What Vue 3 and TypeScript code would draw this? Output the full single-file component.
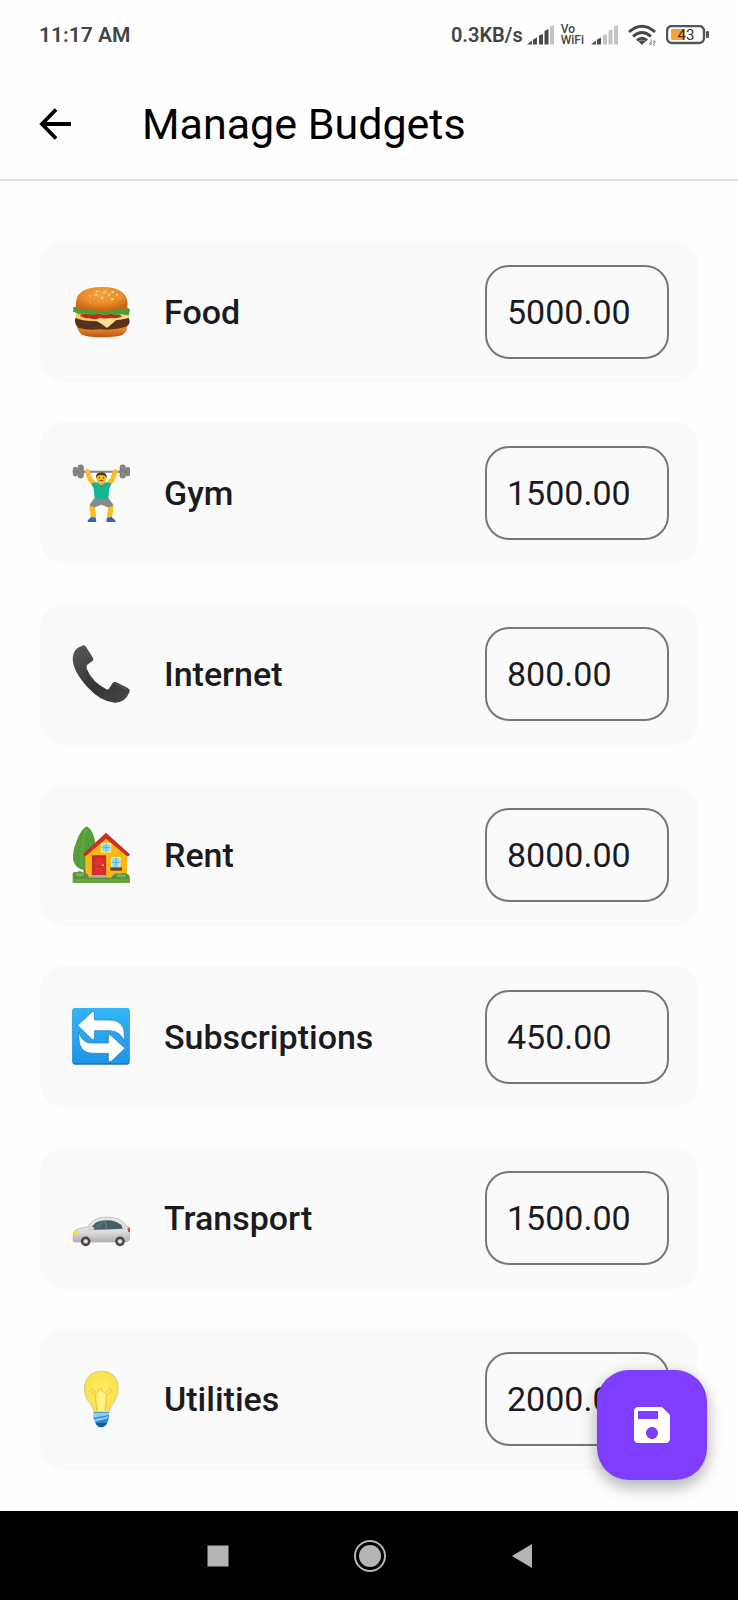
<script setup lang="ts">
import { reactive } from 'vue'

interface Budget {
  id: string
  name: string
  view: string
  amount: string
}

const budgets = reactive<Budget[]>([
  { id: 'food', name: 'Food', view: '36 39 174 174', amount: '5000.00' },
  { id: 'gym', name: 'Gym', view: '36 27 174 174', amount: '1500.00' },
  { id: 'internet', name: 'Internet', view: '36 31 174 174', amount: '800.00' },
  { id: 'rent', name: 'Rent', view: '36 35 174 174', amount: '8000.00' },
  { id: 'subscriptions', name: 'Subscriptions', view: '36 24 174 174', amount: '450.00' },
  { id: 'transport', name: 'Transport', view: '36 -1 174 174', amount: '1500.00' },
  { id: 'utilities', name: 'Utilities', view: '36 33 174 174', amount: '2000.00' },
])
</script>

<template>
  <div class="screen">
    <div class="status">
      <span class="time">11:17 AM</span>
      <div class="indicators">
        <span class="speed">0.3KB/s</span>
        <svg class="signal" viewBox="0 0 27 20" aria-hidden="true">
          <g fill="#4a4a4a">
            <path d="M0 19.500l5-4v4z" />
            <path d="M6 14.500l4-2v7h-4zM12 10.500l4-1.500v10.500h-4zM17.500 6l4-2v15.500h-4z" />
          </g>
          <path d="M23 1.500l4-1.500v19.500h-4z" fill="#c4c4c4" />
        </svg>
        <span class="vowifi"><span>Vo</span><span>WiFi</span></span>
        <svg class="signal" viewBox="0 0 27 20" aria-hidden="true">
          <path d="M0 19.500l5-4v4zM6 14.500l4-2v7h-4z" fill="#4a4a4a" />
          <path d="M12 10.500l4-1.500v10.500h-4zM17.500 6l4-2v15.500h-4zM23 1.500l4-1.500v19.500h-4z" fill="#c4c4c4" />
        </svg>
        <svg class="wifi" viewBox="0 0 28 22" aria-hidden="true">
          <g fill="none" stroke="#484848" stroke-width="3">
            <path d="M1 8Q14-3.500 27 8M5 12.500Q14 4.500 23 12.500M9 16.500Q14 12 19 16.500" />
          </g>
          <path d="M10.500 17.500Q14 15 17.500 17.500L14 21z" fill="#484848" />
          <path d="M23 15.500v5.500l-2-2M26 22v-5.500l2 2" fill="none" stroke="#777" />
        </svg>
        <svg class="battery" viewBox="0 0 43 20" role="img" aria-label="Battery 43">
          <rect x="1" y="1" width="37" height="17" rx="5" fill="none" stroke="#555" stroke-width="2.400" />
          <rect x="5" y="4" width="14" height="11" rx="1" fill="#f2a63a" />
          <rect x="40" y="6" width="3" height="7" rx="1" fill="#555" />
          <text x="20" y="15" text-anchor="middle">43</text>
        </svg>
      </div>
    </div>

    <header class="appbar">
      <button class="back" type="button" aria-label="Back">
        <svg viewBox="0 0 32 32" aria-hidden="true">
          <path d="M17 1.500L3 16l14 14.500M3 16h29" fill="none" stroke="#000" stroke-width="3.800" />
        </svg>
      </button>
      <h1>Manage Budgets</h1>
    </header>

    <main class="list">
      <div v-for="b in budgets" :key="b.id" class="card">
        <svg class="emoji" :viewBox="b.view" aria-hidden="true">
          <template v-if="b.id === 'food'">
            <defs>
              <radialGradient id="bun" cx=".5" cy=".3" r=".65">
                <stop offset="0" stop-color="#f5a240" /><stop offset=".6" stop-color="#eb8b2c" /><stop offset="1" stop-color="#c9661a" />
              </radialGradient>
              <linearGradient id="base" x2="0" y2="1">
                <stop offset="0" stop-color="#f39a35" /><stop offset="1" stop-color="#bd5312" />
              </linearGradient>
            </defs>
            <path d="M50 168Q90 185 202 166Q204 185 186 196Q160 202 124 202Q88 202 66 194Q54 185 50 168z" fill="url(#base)" />
            <path d="M47 132h159v24H47z" fill="#f3c95c" />
            <path d="M46 144Q80 156 125 153Q170 151 206 143Q214 160 201 169Q165 182 120 178Q80 182 55 173Q42 162 46 144z" fill="#59301a" />
            <path d="M55 138Q80 132 200 137L205 144Q182 150 170 149L141 174Q120 158 105 151Q75 151 55 138z" fill="#ffe08a" />
            <path d="M60 138Q65 126 110 130Q170 126 187 139Q170 148 152 143Q136 148 120 143Q105 152 88 145Q74 147 60 138z" fill="#c92518" />
            <path d="M38 112Q48 108 60 113Q125 122 193 113Q206 111 211 121Q206 128 208 134Q196 137 184 132Q170 139 153 132Q132 140 116 132Q91 139 74 130Q58 136 48 128L38 124Q43 118 38 112z" fill="#4d9d37" />
            <path d="M48 115Q44 80 64 66Q84 51 126 51Q169 51 187 67Q207 83 202 115Q125 132 48 115z" fill="url(#bun)" />
            <g fill="#ffdca0">
              <ellipse cx="110" cy="64" rx="4" ry="2.500" /><ellipse cx="134" cy="65" rx="4" ry="3" /><ellipse cx="158" cy="66" rx="4" ry="3" />
              <ellipse cx="90" cy="78" rx="3" ry="3" /><ellipse cx="108" cy="75" rx="4" ry="3" /><ellipse cx="126" cy="84" rx="3" ry="4" /><ellipse cx="147" cy="74" rx="4" ry="3" />
              <ellipse cx="157" cy="88" rx="4" ry="3" /><ellipse cx="171" cy="75" rx="3" ry="4" />
            </g>
          </template>

          <template v-else-if="b.id === 'gym'">
            <path d="M38 47h172v6H38z" fill="#858585" />
            <g fill="#858585" stroke="#6b6d6f" stroke-width="2">
              <rect x="40" y="37" width="12" height="26" rx="5" /><rect x="54" y="30" width="16" height="39" rx="6" />
              <rect x="180" y="30" width="16" height="39" rx="6" /><rect x="198" y="37" width="11" height="26" rx="5" />
            </g>
            <g fill="none" stroke="#fbbd22" stroke-linejoin="round" stroke-linecap="round" stroke-width="14">
              <path d="M82 49L91 74L106 91M166 49L157 74L142 91" />
              <path d="M107 146L96 155L100 184M143 146L153 155L149 184" stroke-width="16" />
            </g>
            <path d="M94 85Q107 80 124 82Q141 80 154 85L148 102L145 132Q124 139 104 132L101 102z" fill="#16b593" />
            <path d="M103 129Q124 136 145 129L160 149Q152 159 140 155L124 149L109 155Q97 158 89 149z" fill="#848b8e" />
            <rect x="116" y="78" width="16" height="12" rx="7" fill="#f3aa1c" />
            <ellipse cx="124" cy="70" rx="15" ry="17" fill="#fbbd22" />
            <path d="M108 70Q106 52 124 52Q142 52 140 70L135 62Q123 58 113 62z" fill="#56331c" />
            <path d="M117 76Q124 72 131 76Q124 80 117 76z" fill="#573018" />
            <circle cx="118" cy="69" r="2" fill="#49331f" /><circle cx="130" cy="69" r="2" fill="#49331f" />
            <path d="M92 186L107 188Q110 195 108 201H83Q82 193 92 188zM156 186L141 188Q138 195 140 201H167Q167 193 156 188z" fill="#3465b5" />
          </template>

          <template v-else-if="b.id === 'internet'">
            <defs>
              <linearGradient id="handset" x2="1" y2="1">
                <stop offset="0" stop-color="#5a5a5a" /><stop offset=".55" stop-color="#333" /><stop offset="1" stop-color="#4a4a4a" />
              </linearGradient>
            </defs>
            <path d="M66 33Q74 29 79 38L99 70Q102 76 96 80L81 91Q78 96 81 104Q96 142 139 164Q145 167 148 161L156 148Q160 139 169 143L203 160Q213 165 207 175Q195 205 164 204Q123 202 82 157Q38 109 38 71Q39 43 66 33z" fill="url(#handset)" />
            <path d="M70 36L91 72M168 148L201 166" stroke="#6a6a6a" stroke-width="3" fill="none" opacity=".6" />
          </template>

          <template v-else-if="b.id === 'rent'">
            <path d="M71 152h10v35H71z" fill="#815535" />
            <path d="M80 36Q99 47 105 81Q115 119 107 148Q97 168 75 168Q47 164 40 139Q36 112 50 80Q63 44 80 36z" fill="#559d39" />
            <path d="M80 43Q66 76 64 155" stroke="#74b34d" stroke-width="10" fill="none" opacity=".35" />
            <path d="M76 120L138 69L201 120V203H76z" fill="#f8b818" />
            <path d="M138 55L209 119Q210 126 201 126L138 73L77 126Q69 125 69 119z" fill="#c93127" />
            <g fill="#8be0f8" stroke="#fff2b9" stroke-width="3">
              <rect x="125" y="88" width="27" height="25" /><rect x="155" y="130" width="25" height="29" />
            </g>
            <path d="M138 88v25M125 100h27M168 130v29M155 144h25" stroke="#439cc0" stroke-width="2" />
            <path d="M151 159h35v10h-35z" fill="#743b2d" />
            <path d="M97 124h40v60H97z" fill="#cf2b28" stroke="#9b2523" stroke-width="2" />
            <path d="M104 132h26v20h-26zM104 158h26v20h-26z" fill="#dc3430" /><circle cx="129" cy="153" r="3" fill="#fce35b" />
            <path d="M91 182h51v9H91z" fill="#b2a6a6" /><path d="M84 190h65v10H84z" fill="#827b7b" />
            <path d="M38 198V181Q38 171 50 174Q61 167 72 177Q85 174 87 191H148Q157 190 157 184Q167 174 179 178Q193 171 207 182Q211 188 209 205H38z" fill="#58923a" />
            <path d="M39 194h170v12H39z" fill="#67a53c" />
            <ellipse cx="59" cy="181" rx="13" ry="5" fill="#77b34a" /><ellipse cx="184" cy="184" rx="14" ry="5" fill="#77b34a" />
          </template>

          <template v-else-if="b.id === 'subscriptions'">
            <defs>
              <linearGradient id="tile" x2="0" y2="1">
                <stop offset="0" stop-color="#36b4f5" /><stop offset="1" stop-color="#1e94e8" />
              </linearGradient>
            </defs>
            <rect x="37" y="25" width="172" height="169" rx="9" fill="#2473aa" />
            <rect x="37" y="24" width="171" height="166" rx="8" fill="url(#tile)" />
            <g fill="#fff" stroke="#1977b6" stroke-width="2" stroke-linejoin="round">
              <path d="M53 76L96 36Q103 31 103 41V60H150Q194 62 193 105V123Q181 94 151 92H103V112Q102 123 94 116z" />
              <path d="M56 96Q67 128 91 129H145V109Q146 101 154 107L195 145L155 183Q147 189 145 180V160H96Q59 158 57 118z" />
            </g>
          </template>

          <template v-else-if="b.id === 'transport'">
            <defs>
              <linearGradient id="body" x2="0" y2="1">
                <stop offset="0" stop-color="#e7e7e7" /><stop offset=".6" stop-color="#dcdcdf" /><stop offset="1" stop-color="#b0b0b4" />
              </linearGradient>
            </defs>
            <path d="M39 153L40 130Q42 121 60 117L83 112Q99 87 129 84Q166 81 185 95Q196 103 199 109L210 116Q210 130 209 150Q205 158 194 158H45Q38 158 39 153z" fill="url(#body)" stroke="#acacac" stroke-width="2" />
            <path d="M94 116Q103 97 124 94L140 93Q166 92 184 107L188 118Q140 121 94 121z" fill="#455f67" />
            <path d="M135 93l5 25" stroke="#71868a" stroke-width="3" /><path d="M102 112L119 98h16l-18 18z" fill="#5b7780" opacity=".6" />
            <ellipse cx="94" cy="117" rx="9" ry="5" fill="#ddd" stroke="#aaa" />
            <path d="M43 125Q51 121 55 125Q54 136 43 138Q37 137 40 131z" fill="#eee536" />
            <path d="M202 116Q209 114 210 117L209 130L204 126z" fill="#db4637" />
            <path d="M92 151h72v6H92z" fill="#b5b5b8" />
            <g fill="#aaa0a0" stroke="#50403f" stroke-width="7"><circle cx="77" cy="156" r="11" /><circle cx="180" cy="156" r="11" /></g>
            <g fill="#eee"><circle cx="77" cy="156" r="5" /><circle cx="180" cy="156" r="5" /></g>
          </template>

          <template v-else>
            <defs>
              <radialGradient id="glass">
                <stop offset="0" stop-color="#ffef69" /><stop offset="1" stop-color="#fbe04a" />
              </radialGradient>
            </defs>
            <path d="M102 160Q101 147 89 132Q70 111 74 80Q80 38 123 36Q168 37 174 78Q178 110 158 135Q148 148 147 160z" fill="url(#glass)" stroke="#cdd391" stroke-width="3" />
            <path d="M110 155L106 107Q94 100 90 94Q98 84 105 99Q110 107 115 97Q121 74 127 96Q132 109 141 97Q149 84 157 94Q150 104 140 107L137 155" fill="none" stroke="#ecc63a" stroke-width="3" />
            <path d="M111 104Q124 92 137 104L133 157H115z" fill="#fff6a0" opacity=".65" />
            <path d="M101 160h46v18l-8 20q-14 12-30 0l-8-20z" fill="#2c88d0" />
            <path d="M101 162h46v6l-46 8zM102 181l44-9v6l-42 10z" fill="#8bcef6" />
            <path d="M107 192h33l-7 10q-10 6-19 0z" fill="#155a9c" />
          </template>
        </svg>
        <label class="name" :for="b.id">{{ b.name }}</label>
        <input :id="b.id" v-model="b.amount" class="amount" type="text" inputmode="decimal" />
      </div>
    </main>

    <button class="save" type="button" aria-label="Save budgets">
      <svg viewBox="3 3 18 18" aria-hidden="true">
        <path d="M17 3H5c-1.110 0-2 .9-2 2v14c0 1.100.89 2 2 2h14c1.100 0 2-.9 2-2V7l-4-4zm-5 16c-1.660 0-3-1.340-3-3s1.340-3 3-3 3 1.340 3 3-1.340 3-3 3zm3-10H5V5h10v4z" fill="#fff" />
      </svg>
    </button>

    <nav class="sysnav" aria-label="System">
      <button type="button" aria-label="Recent apps">
        <svg viewBox="0 0 32 32" aria-hidden="true"><path d="M5.500 5.500h21v21h-21z" fill="#b5b5b5" /></svg>
      </button>
      <button type="button" aria-label="Home">
        <svg viewBox="0 0 32 32" aria-hidden="true">
          <circle cx="16" cy="16" r="15" fill="none" stroke="#b5b5b5" stroke-width="2" /><circle cx="16" cy="16" r="11" fill="#b5b5b5" />
        </svg>
      </button>
      <button type="button" aria-label="Back to previous screen">
        <svg viewBox="0 0 32 32" aria-hidden="true"><path d="M6 16L26 4v24z" fill="#b5b5b5" /></svg>
      </button>
    </nav>
  </div>
</template>

<style>
body {
  margin: 0;
  background: #fff;
}
</style>

<style scoped>
.screen {
  position: relative;
  display: flex;
  flex-direction: column;
  min-height: 100vh;
  background: #fefefe;
  color: #1b1b1f;
  font-family: Roboto, "Noto Sans", sans-serif;
}
button {
  display: flex;
  align-items: center;
  justify-content: center;
  padding: 0;
  border: 0;
  background: none;
  cursor: pointer;
}
svg {
  display: block;
  flex: none;
}
.status {
  display: flex;
  align-items: center;
  justify-content: space-between;
  height: 69px;
  padding: 0 29px 0 39px;
  color: #444;
  font-size: 21px;
  font-weight: 600;
}
.indicators {
  display: flex;
  align-items: center;
}
.speed {
  margin-right: 4px;
  font-size: 20px;
}
.signal {
  width: 27px;
  height: 20px;
}
.vowifi {
  display: flex;
  flex-direction: column;
  margin: 0 7px;
  font-size: 12px;
  font-weight: 500;
  line-height: 11px;
}
.wifi {
  width: 28px;
  height: 22px;
  margin: 0 10px;
}
.battery {
  width: 43px;
  height: 20px;
}
.battery text {
  fill: #333;
  font-size: 15px;
  font-weight: 400;
}
.appbar {
  display: flex;
  align-items: center;
  gap: 71px;
  height: 110px;
  padding: 0 39px;
  border-bottom: 2px solid #dedede;
}
.back svg {
  width: 32px;
  height: 32px;
}
h1 {
  margin: 0;
  color: #000;
  font-size: 43px;
  font-weight: 400;
  line-height: 52px;
}
.list {
  display: flex;
  flex: 1;
  flex-direction: column;
  justify-content: space-between;
  gap: 40px;
  padding: 60px 40px 41px;
}
.card {
  display: flex;
  align-items: center;
  gap: 34px;
  height: 141px;
  padding: 0 29px 0 32px;
  border-radius: 24px;
  background: #fafafa;
}
.emoji {
  width: 58px;
  height: 58px;
}
.name {
  flex: 1;
  font-size: 34px;
  font-weight: 500;
  line-height: 40px;
}
.amount {
  box-sizing: border-box;
  width: 184px;
  height: 94px;
  padding: 0 20px;
  border: 2px solid #77777a;
  border-radius: 24px;
  background: transparent;
  color: #1b1b1f;
  font-family: inherit;
  font-size: 34px;
}
.save {
  position: absolute;
  right: 31px;
  bottom: 120px;
  width: 110px;
  height: 110px;
  border-radius: 32px;
  background: #7f3dff;
  box-shadow: 0 8px 16px rgba(0, 0, 0, 0.24), 0 2px 16px rgba(0, 0, 0, 0.1);
}
.save svg {
  width: 36px;
  height: 36px;
}
.sysnav {
  display: flex;
  align-items: center;
  justify-content: center;
  gap: 120px;
  height: 89px;
  padding-left: 2px;
  background: #000;
}
.sysnav svg {
  width: 32px;
  height: 32px;
}
</style>
